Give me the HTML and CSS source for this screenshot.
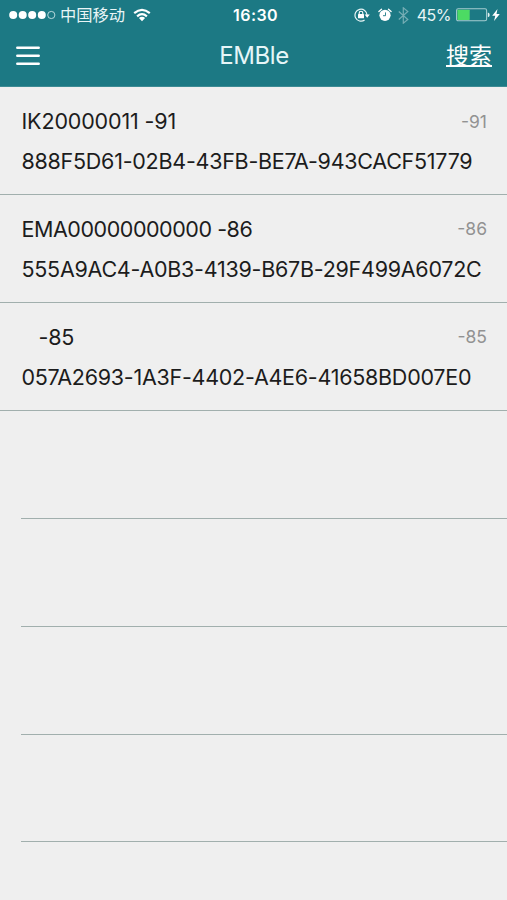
FILE: index.html
```html
<!DOCTYPE html>
<html lang="zh-CN">
<head>
<meta charset="utf-8">
<title>EMBle</title>
<link rel="stylesheet" href="styles.css">
</head>
<body>
<header class="header">
  <div class="status">
    <div class="carrier">
      <svg class="signal" width="47" height="10" viewBox="0 0 47 10"><g fill="#fff"><circle cx="4.2" cy="5" r="4"/><circle cx="13.7" cy="5" r="4"/><circle cx="23.2" cy="5" r="4"/><circle cx="32.8" cy="5" r="4"/></g><circle cx="42.3" cy="5" r="3.6" fill="none" stroke="#c5e2e4" stroke-width=".9"/></svg>
      <span class="operator">中国移动</span>
      <svg class="wifi" width="18" height="14" viewBox="0 0 18 14"><g fill="none" stroke="#fff" stroke-width="2.2"><path d="M1.2 5.2Q9-1.4 16.8 5.2"/><path d="M4.1 8.3Q9 4.1 13.9 8.3"/></g><path d="M5.9 10Q9 7.6 12.1 10L9 13.2Z" fill="#fff"/></svg>
    </div>
    <span class="time">16:30</span>
    <div class="indicators">
      <svg class="lock" width="17" height="14" viewBox="0 0 17 14"><path d="M10.6 12A6 6 0 1 1 13 7" fill="none" stroke="#e6f4f5" stroke-width="1.2"/><path d="M10.6 6.6h5.2l-2.6 3.2z" fill="#fff"/><rect x="4" y="6" width="6" height="4.3" rx=".5" fill="#fff"/><path d="M5.2 6.3V5a1.8 1.8 0 0 1 3.6 0v1.3" fill="none" stroke="#fff" stroke-width="1.1"/></svg>
      <svg class="alarm" width="14" height="14" viewBox="0 0 14 14"><circle cx="7" cy="7.3" r="5.6" fill="#fff"/><path d="M.9 3.6L3.5 1.2M13.1 3.6L10.5 1.2" stroke="#fff" stroke-width="1.3" stroke-linecap="round"/><path d="M7.5 4.4v3.3H5" fill="none" stroke="#1c7984" stroke-width=".9"/></svg>
      <svg class="bluetooth" width="11" height="17" viewBox="0 0 11 17"><path d="M.8 4.5l9 8-4.5 3.7V.8l4.5 3.7-9 8" fill="none" stroke="#75adb4" stroke-width="1.2"/></svg>
      <span class="percent">45%</span>
      <svg class="battery" width="34" height="14" viewBox="0 0 34 14"><rect x=".6" y=".8" width="30" height="12" rx="1.6" fill="none" stroke="#a5ccd0" stroke-width="1.1"/><rect x="1.5" y="1.7" width="12.2" height="10.2" rx=".6" fill="#4cdb63"/><path d="M31.8 4.6q1.9.5 1.9 2.3t-1.9 2.3z" fill="#e4f2f3"/></svg>
      <svg class="bolt" width="8" height="12" viewBox="0 0 8 12"><path d="M5.5 0L.2 6.7h3.1L2 12l5.8-7.1H4.5z" fill="#fff"/></svg>
    </div>
  </div>
  <nav class="nav">
    <svg class="menu" width="24" height="20" viewBox="0 0 24 20"><path d="M1.3 1.8h21.4M1.3 9.8h21.4M1.3 17.8h21.4" stroke="#fff" stroke-width="2.5" stroke-linecap="round"/></svg>
    <h1 class="title">EMBle</h1>
    <a class="search">搜索</a>
  </nav>
</header>
<main class="list">
  <section class="row">
    <div class="top"><span class="name first">IK20000011 -91</span><span class="rssi">-91</span></div>
    <div class="uuid">888F5D61-02B4-43FB-BE7A-943CACF51779</div>
  </section>
  <section class="row">
    <div class="top"><span class="name second">EMA00000000000 -86</span><span class="rssi">-86</span></div>
    <div class="uuid">555A9AC4-A0B3-4139-B67B-29F499A6072C</div>
  </section>
  <section class="row">
    <div class="top"><span class="name unnamed">-85</span><span class="rssi">-85</span></div>
    <div class="uuid">057A2693-1A3F-4402-A4E6-41658BD007E0</div>
  </section>
  <div class="row empty"></div>
  <div class="row empty"></div>
  <div class="row empty"></div>
  <div class="row empty"></div>
</main>
</body>
</html>
```
FILE: styles.css
```css
* { box-sizing: border-box; }
body {
  margin: 0;
  height: 900px;
  overflow: hidden;
  background: #efefef;
  color: #1c1c1c;
  font-family: Inter, "Noto Sans CJK SC", sans-serif;
}
svg { display: block; flex: none; }
.header { height: 87px; background: #1c7984; color: #fff; border-bottom: 1px solid #3d8b94; }
.status {
  height: 30px;
  display: grid;
  grid-template-columns: 1fr auto 1fr;
  align-items: center;
  padding: 0 7px 0 9px;
}
.carrier, .indicators { display: flex; align-items: center; }
.indicators { justify-content: flex-end; }
.operator { margin-left: 4px; font-size: 16.3px; line-height: 30px; color: #e9f5f6; }
.wifi { margin-left: 8px; }
.time { font-size: 16px; font-weight: 600; line-height: 30px; letter-spacing: .4px; margin-left: 2px; }
.alarm { margin-left: 7px; }
.bluetooth { margin-left: 6px; }
.percent { margin-left: 8px; font-size: 16px; letter-spacing: -.5px; color: #e9f5f6; }
.battery { margin-left: 5px; }
.bolt { margin-left: 2px; }
.nav {
  height: 52px;
  display: grid;
  grid-template-columns: 1fr auto 1fr;
  align-items: center;
  padding: 0 15px 0 16px;
}
.menu { margin-top: -1px; }
.title { margin: 0; font-size: 24px; line-height: 52px; font-weight: 400; letter-spacing: -.4px; color: #e6f6f8; }
.search { justify-self: end; font-size: 23px; line-height: 52px; text-decoration: underline; text-decoration-thickness: 1.5px; text-underline-offset: 1px; }
.row { height: 107.93px; padding: 14px 20px 0 21.5px; border-bottom: 1px solid #a1afad; }
.row.empty { margin-left: 21px; padding: 0; }
.top { display: flex; justify-content: space-between; align-items: center; height: 40px; }
.name, .uuid { font-size: 21.5px; white-space: nowrap; letter-spacing: -.26px; }
.name.first { letter-spacing: -.15px; }
.name.second { letter-spacing: -.45px; }
.uuid { line-height: 41px; }
.unnamed { margin-left: 17px; }
.rssi { font-size: 17.5px; color: #929292; }
```
